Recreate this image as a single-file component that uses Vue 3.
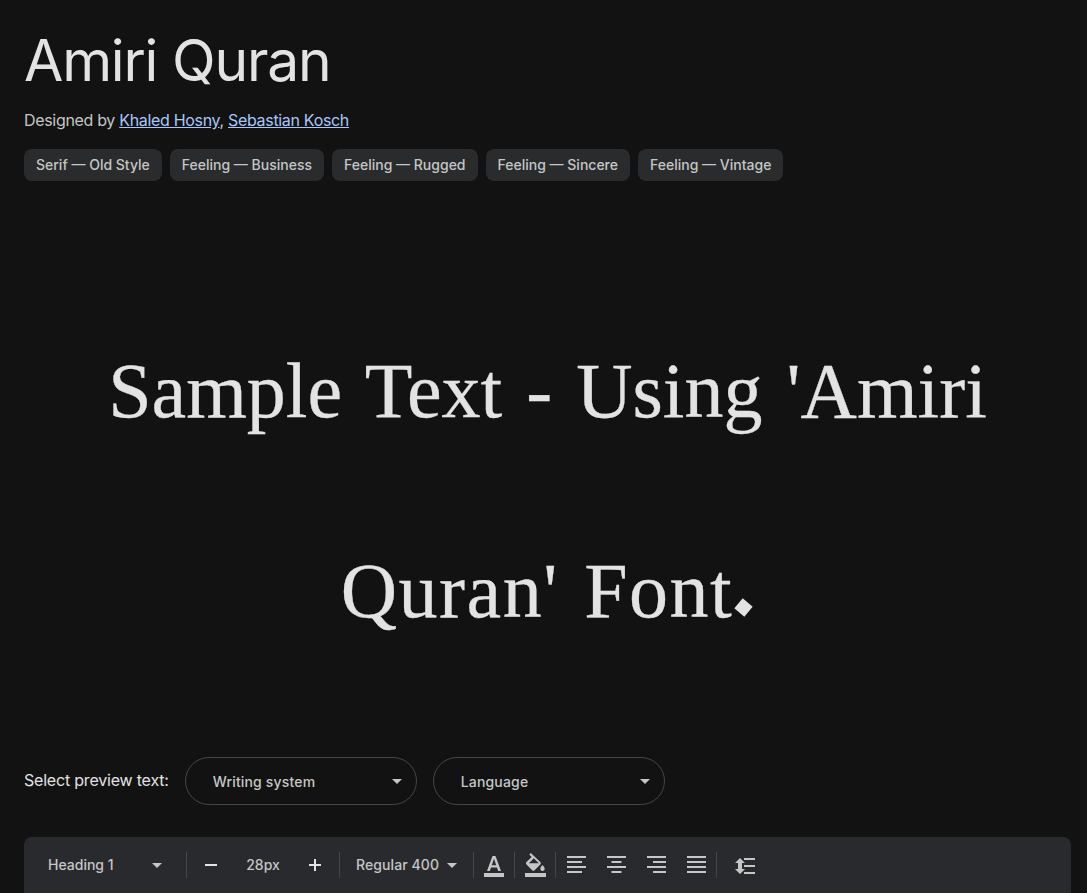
<script setup>
const tags = ['Serif — Old Style', 'Feeling — Business', 'Feeling — Rugged', 'Feeling — Sincere', 'Feeling — Vintage']
const aligns = [
  'M3 3h19v2H3zM3 8h15v2H3zM3 13h19v2H3zM3 18h15v2H3z',
  'M3 3h19v2H3zM7.500 8h10v2h-10zM3 13h19v2H3zM7.500 18h10v2h-10z',
  'M3 3h19v2H3zM9 8h13v2H9zM3 13h19v2H3zM9 18h13v2H9z',
  'M3 3h19v2H3zM3 8h19v2H3zM3 13h19v2H3zM3 18h19v2H3z'
]
</script>

<template>
  <main class="page">
    <h1 class="title">Amiri Quran</h1>
    <p class="byline">Designed by <a href="#">Khaled Hosny</a>, <a href="#">Sebastian Kosch</a></p>
    <ul class="tags">
      <li v-for="t in tags" :key="t" class="tag">{{ t }}</li>
    </ul>
    <p class="sample">Sample Text - Using 'Amiri <span class="line2">Quran' Font<span class="dot">.</span></span></p>
    <div class="select-row">
      <span class="select-label">Select preview text:</span>
      <div class="pill"><span class="pill-text">Writing system</span><i class="caret"></i></div>
      <div class="pill"><span class="pill-text">Language</span><i class="caret"></i></div>
    </div>
    <div class="toolbar">
      <div class="tb-style"><span>Heading 1</span><i class="caret"></i></div>
      <i class="sep"></i>
      <div class="tb-size">
        <svg class="ico-s" viewBox="0 0 16 16"><path d="M2 7h12v2H2z" /></svg>
        <span>28px</span>
        <svg class="ico-s" viewBox="0 0 16 16"><path d="M7 2h2v5h5v2H9v5H7V9H2V7h5z" /></svg>
      </div>
      <i class="sep"></i>
      <div class="tb-weight"><span class="wt">Regular 400</span><i class="caret"></i></div>
      <i class="sep"></i>
      <svg class="ico" viewBox="0 0 24 24"><path d="M2 20h20v4H2z" /><path fill-rule="evenodd" d="M10.500 3h3L19 18h-2.800l-1.200-3.500H9L7.800 18H5zM9.800 12.200h4.400L12 5.800z" /></svg>
      <i class="sep narrow"></i>
      <svg class="ico" viewBox="0 0 24 24"><path d="M2 20h21v4H2z" /><path fill-rule="evenodd" d="M7.800 0L6.300 1.500l2.400 2.400-5.200 5.200c-.7.700-.7 1.700 0 2.400l5.700 5.700c.7.700 1.700.7 2.400 0l5.700-5.700c.7-.7.7-1.700 0-2.400zM5.800 10.200l5-5 5 5z" /><path d="M19.500 12s-2.200 2.300-2.200 3.800a2.200 2.200 0 0 0 4.400 0c0-1.500-2.200-3.800-2.200-3.800z" /></svg>
      <i class="sep narrow"></i>
      <div class="aligns">
        <svg v-for="d in aligns" :key="d" class="ico-a" viewBox="0 0 24 24"><path :d="d" /></svg>
      </div>
      <i class="sep narrow"></i>
      <svg class="ico-lh" viewBox="0 0 24 24"><path d="M7 5l5 5H9v6h3l-5 5-5-5h3v-6H2zM11 5h11v2H11zM11 12h11v2H11zM11 19h11v2H11z" /></svg>
    </div>
  </main>
</template>

<style>
html, body { background: #121212; }
</style>

<style scoped>
.page {
  height: 893px;
  overflow: hidden;
  box-sizing: border-box;
  padding: 0 16px 0 24px;
  background: #121212;
  color: #e3e3e3;
  font-family: "Inter", "Noto Sans", sans-serif;
}
.title {
  margin: 0;
  padding-top: 25px;
  height: 72px;
  font: 400 57px/72px "Inter", sans-serif;
  letter-spacing: -1.2px;
  color: #e3e3e3;
}
.byline {
  margin: 11px 0 0;
  font: 400 16px/24px "Inter", sans-serif;
  letter-spacing: -0.32px;
  color: #c4c7c5;
}
.byline a { color: #a8c7fa; text-decoration: underline; }
.tags {
  list-style: none;
  display: flex;
  gap: 8px;
  margin: 17px 0 0;
  padding: 0;
}
.tag {
  height: 32px;
  padding: 0 12px;
  border-radius: 8px;
  background: #2a2b2d;
  color: #c4c7c5;
  font: 500 14px/32px "Inter", sans-serif;
}
.sample {
  width: 900px;
  margin: 110px auto 0;
  text-align: center;
  font: 400 78px/200px "Liberation Serif", serif;
  word-spacing: 4.5px;
  -webkit-text-stroke: 0.3px #e3e3e3;
  color: #e3e3e3;
}
.line2 { letter-spacing: 1.5px; }
.dot { position: relative; top: -5px; }
.dot::after {
  content: "";
  position: absolute;
  left: 4px;
  top: 59px;
  width: 13px;
  height: 13px;
  background: #e3e3e3;
  transform: rotate(40deg);
}
.select-row {
  display: flex;
  align-items: center;
  gap: 16px;
  margin-top: 66px;
}
.select-label {
  padding-bottom: 2px;
  font: 400 16px/24px "Inter", sans-serif;
  letter-spacing: -0.2px;
  color: #e3e3e3;
}
.pill {
  box-sizing: border-box;
  width: 232px;
  height: 48px;
  display: flex;
  align-items: center;
  justify-content: space-between;
  padding: 0 14px 0 27px;
  border: 1px solid #444746;
  border-radius: 24px;
  color: #c4c7c5;
  font: 500 14px/20px "Inter", sans-serif;
}
.pill-text {
  padding-top: 2px;
  letter-spacing: 0.17px;
}
.caret {
  width: 0;
  height: 0;
  flex: none;
  border-left: 5px solid transparent;
  border-right: 5px solid transparent;
  border-top: 5px solid #c4c7c5;
}
.toolbar {
  display: flex;
  align-items: center;
  height: 72px;
  margin-top: 32px;
  padding: 0 0 16px 24px;
  box-sizing: border-box;
  width: 1047px;
  border-radius: 8px 8px 0 0;
  background: #292a2d;
  color: #c4c7c5;
  font: 500 14px/20px "Inter", sans-serif;
}
.tb-style {
  display: flex;
  align-items: center;
  justify-content: space-between;
  padding-right: 24px;
  box-sizing: border-box;
  width: 138px;
}
.sep {
  width: 1px;
  height: 26px;
  flex: none;
  background: #444746;
}
.tb-size {
  width: 152px;
  box-sizing: border-box;
  display: flex;
  align-items: center;
  justify-content: space-between;
  padding: 0 16px;
}
.tb-weight {
  display: flex;
  align-items: center;
  gap: 8px;
  padding: 0 16px;
}
.wt { letter-spacing: 0.09px; }
.ico { width: 24px; height: 24px; fill: #c4c7c5; margin: 0 8px; flex: none; }
.ico-s { width: 16px; height: 16px; fill: #e3e3e3; flex: none; }
.aligns { display: flex; gap: 16px; padding: 0 8px; }
.ico-a { width: 24px; height: 24px; fill: #c4c7c5; flex: none; }
.ico-lh { width: 24px; height: 24px; fill: #c4c7c5; margin-left: 16px; flex: none; }
</style>
